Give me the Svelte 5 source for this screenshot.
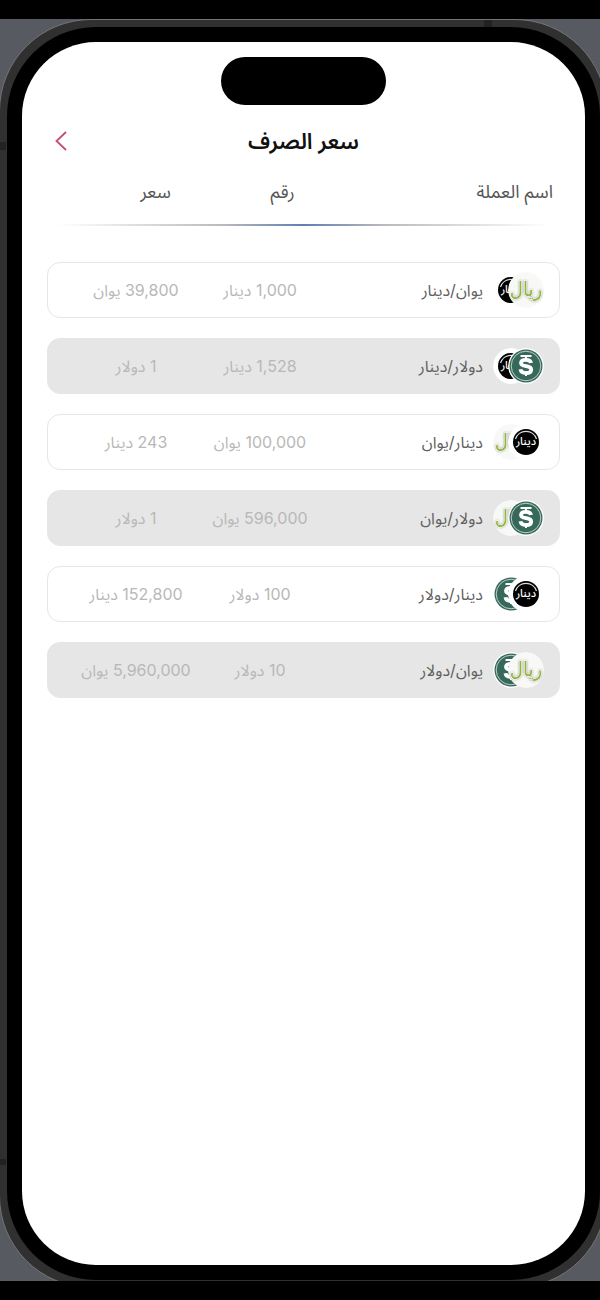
<script lang="ts">
	type Coin = 'dinar' | 'riyal' | 'dollar';

	const rates: { name: string; amount: string; price: string; front: Coin; back: Coin }[] = [
		{ name: 'يوان/دينار', amount: '1,000 دينار', price: '39,800 يوان', front: 'riyal', back: 'dinar' },
		{ name: 'دولار/دينار', amount: '1,528 دينار', price: '1 دولار', front: 'dollar', back: 'dinar' },
		{ name: 'دينار/يوان', amount: '100,000 يوان', price: '243 دينار', front: 'dinar', back: 'riyal' },
		{ name: 'دولار/يوان', amount: '596,000 يوان', price: '1 دولار', front: 'dollar', back: 'riyal' },
		{ name: 'دينار/دولار', amount: '100 دولار', price: '152,800 دينار', front: 'dinar', back: 'dollar' },
		{ name: 'يوان/دولار', amount: '10 دولار', price: '5,960,000 يوان', front: 'riyal', back: 'dollar' },
	];
</script>

{#snippet coin(kind: Coin)}
	<svg class="coin" viewBox="0 0 36 36" aria-hidden="true">
		{#if kind === 'dinar'}
			<circle cx="18" cy="18" r="18" fill="#fff" />
			<circle cx="18" cy="18" r="13" fill="#000" />
			<path d="M7.500 15a11 11 0 0 1 21 0" fill="none" stroke="#ddd" stroke-width="1.2" />
			<text class="dinar-text" x="18" y="21" text-anchor="middle">دينار</text>
		{:else if kind === 'riyal'}
			<circle cx="18" cy="18" r="18" fill="#f8f9f7" />
			<text class="riyal-text" x="18" y="24" text-anchor="middle">ريال</text>
		{:else}
			<circle cx="18" cy="18" r="18" fill="#fff" />
			<circle cx="18" cy="18" r="16.5" fill="#37695b" />
			<circle cx="18" cy="18" r="14.8" fill="none" stroke="#dfe9e5" stroke-width="0.8" />
			<path d="M12.500 8h11M18 9v4M18 24v4" fill="none" stroke="#fff" stroke-width="2" />
			<path
				d="M23 15c-.3-2.200-2.200-3.200-5-3.200-3 0-5 1.100-5 3.300 0 4.500 10.200 1.700 10.200 6.300 0 2.400-2.200 3.600-5.200 3.600-3.200 0-5.200-1.300-5.500-3.700"
				fill="none"
				stroke="#fff"
				stroke-width="3.8"
			/>
			<path d="M17 14v2M19 14v2M17 20.500v2M19 20.500v2" stroke="#37695b" stroke-width="0.8" />
		{/if}
	</svg>
{/snippet}

<div class="stage">
	<div class="phone">
		<main class="screen" dir="rtl">
			<div class="island"></div>

			<header class="title-bar">
				<h1>سعر الصرف</h1>
				<button class="back" aria-label="رجوع">
					<svg viewBox="0 0 12 20" aria-hidden="true">
						<path d="M11 1L1.500 10L11 19" fill="none" stroke="#c54e74" stroke-width="1.8" />
					</svg>
				</button>
			</header>

			<table class="rates">
				<thead>
					<tr>
						<th>اسم العملة</th>
						<th>رقم</th>
						<th>سعر</th>
					</tr>
				</thead>
				<tbody>
					{#each rates as rate, i}
						<tr class:shaded={i % 2 === 1}>
							<td class="currency">
								<span class="coins">
									{@render coin(rate.back)}
									{@render coin(rate.front)}
								</span>
								{rate.name}
							</td>
							<td>{rate.amount}</td>
							<td>{rate.price}</td>
						</tr>
					{/each}
				</tbody>
			</table>
		</main>
	</div>
</div>

<style>
	:global(body) {
		background: #000;
	}

	.stage {
		display: flex;
		box-sizing: border-box;
		min-height: 100vh;
		border: solid #000;
		border-width: 19px 0;
		background: #575a61;
		overflow: hidden;
		font-family: Inter, 'Noto Sans Arabic', 'DejaVu Sans', sans-serif;
	}

	.phone {
		flex: 1;
		display: flex;
		margin: 0 -7px -7px -1px;
		padding: 7px 6px;
		border: 1px solid #747474;
		border-radius: 92px;
		background:
			linear-gradient(#222, #222) 0 122px / 6px 8px no-repeat,
			linear-gradient(#222, #222) 0 1139px / 6px 6px no-repeat,
			linear-gradient(#222, #222) 484px 0 / 8px 7px no-repeat,
			#303030;
	}

	.screen {
		flex: 1;
		box-sizing: border-box;
		padding: 15px 25px;
		border-radius: 74px;
		background: #fff;
		box-shadow: 0 0 0 15px #000;
		margin: 15px 15px 15px 16px;
	}

	.island {
		width: 165px;
		height: 48px;
		margin: 0 auto;
		border-radius: 24px;
		background: #000;
	}

	.title-bar {
		display: grid;
		grid-template-columns: 28px 1fr 28px;
		align-items: center;
		height: 40px;
		margin-top: 16px;
	}

	h1 {
		grid-column: 2;
		margin: 0;
		text-align: center;
		font-size: 22px;
		line-height: 38px;
		font-weight: 600;
		color: #111;
	}

	.back {
		display: flex;
		justify-content: flex-end;
		padding: 8px;
		border: 0;
		background: none;
		cursor: pointer;
	}

	.back svg {
		width: 12px;
		height: 20px;
	}

	.rates,
	thead,
	tbody {
		display: block;
	}

	thead {
		padding: 14px 0 17px;
		background: linear-gradient(90deg, #fff 2%, #bbb 34%, #5f7fb4 50%, #bbb 66%, #fff 98%) bottom / 100% 2px no-repeat;
	}

	tr {
		display: grid;
		grid-template-columns: 1fr 124px 124px;
		align-items: center;
	}

	thead tr {
		grid-template-columns: 1fr 127px 127px;
		padding: 0 7px 0 45px;
	}

	th {
		padding: 0;
		font-size: 18px;
		line-height: 34px;
		font-weight: 400;
		color: #555;
	}

	th:first-child {
		text-align: start;
	}

	tbody {
		padding-top: 36px;
	}

	tbody tr {
		box-sizing: border-box;
		height: 56px;
		margin-bottom: 20px;
		padding: 0 15px 0 26px;
		border: 1px solid #e6e6e6;
		border-radius: 13px;
	}

	tbody tr.shaded {
		background: #e6e6e6;
	}

	td {
		padding: 0;
		text-align: center;
		font-size: 16px;
		line-height: 24px;
		color: #b8b8b8;
		white-space: nowrap;
	}

	.currency {
		display: flex;
		align-items: center;
		gap: 10px;
		color: #606060;
	}

	/* the front coin sits on the right, over most of the back one */
	.coins {
		display: flex;
		flex-direction: row-reverse;
	}

	.coin {
		width: 36px;
		height: 36px;
		border-radius: 50%;
	}

	.coin + .coin {
		position: relative;
		margin-left: -21px;
	}

	.dinar-text {
		font-size: 11px;
		font-weight: 500;
		fill: #fff;
	}

	.riyal-text {
		font-family: 'DejaVu Sans Condensed', 'DejaVu Sans', sans-serif;
		font-size: 20px;
		fill: #94b43c;
		stroke: #fff;
		stroke-width: 1px;
		paint-order: stroke;
		filter: drop-shadow(0 0 1px #9aa09c);
	}
</style>
